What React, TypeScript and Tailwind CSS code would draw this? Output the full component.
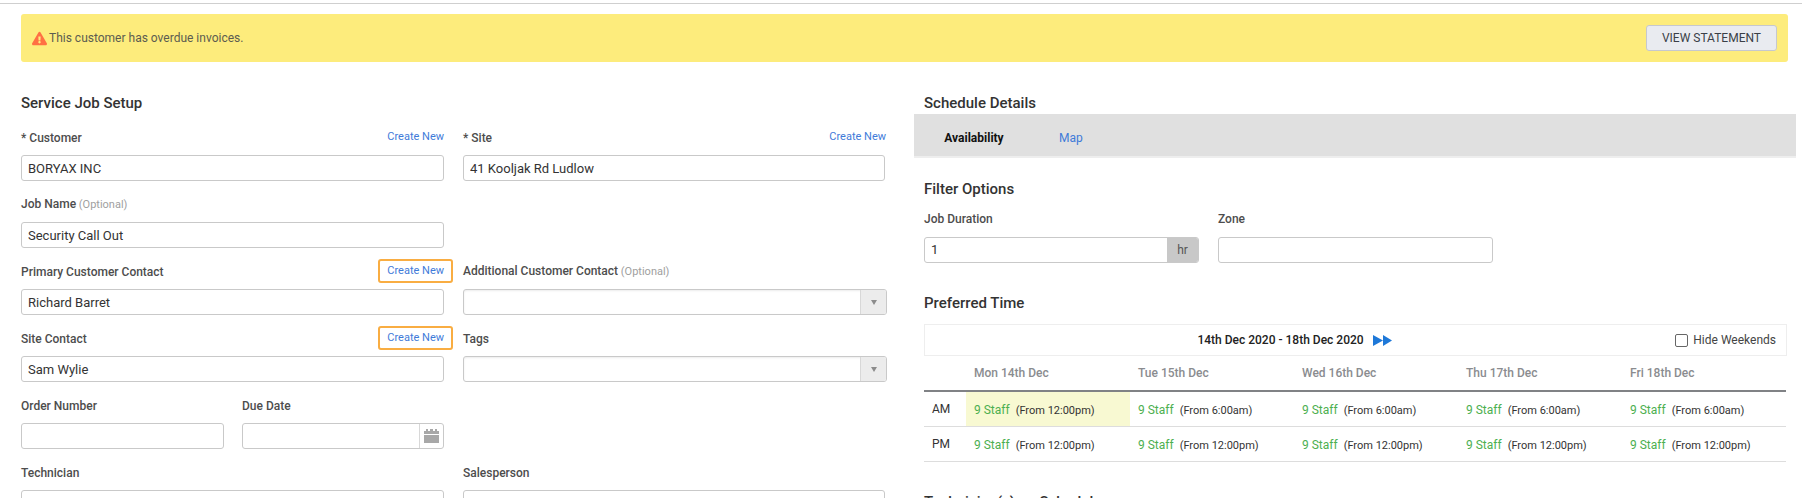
import { FaExclamationTriangle } from "react-icons/fa";

const days = ["Mon 14th Dec", "Tue 15th Dec", "Wed 16th Dec", "Thu 17th Dec", "Fri 18th Dec"];
const amTimes = ["12:00pm", "6:00am", "6:00am", "6:00am", "6:00am"];

function Label({ text, optional }: { text: string; optional?: boolean }) {
  return (
    <span className="text-[12px] leading-[18px] font-medium text-[#4d4d4d]">
      {text}
      {optional && <span className="text-[11px] font-normal text-[#a0a0a0]"> (Optional)</span>}
    </span>
  );
}

function CreateNew({ boxed }: { boxed?: boolean }) {
  return (
    <span className="relative -top-[1px] text-[11px] leading-[18px] text-[#3f7bd9]">
      Create New
      {boxed && (
        <span className="absolute -left-[9px] -right-[9px] -top-[3px] h-[24px] rounded-[3px] border-2 border-[#f9ad42]" />
      )}
    </span>
  );
}

function Field({
  label,
  optional,
  link,
  boxed,
  children,
}: {
  label: string;
  optional?: boolean;
  link?: boolean;
  boxed?: boolean;
  children: React.ReactNode;
}) {
  return (
    <div className="flex h-[67px] flex-col">
      <div className="flex h-[41px] items-end justify-between pb-[8px]">
        <Label text={label} optional={optional} />
        {link && <CreateNew boxed={boxed} />}
      </div>
      {children}
    </div>
  );
}

function TextBox({ value = "", className = "w-full" }: { value?: string; className?: string }) {
  return (
    <input
      readOnly
      value={value}
      className={`h-[26px] rounded-[3px] border border-[#c9c9c9] bg-white px-[6px] text-[13px] text-[#333] outline-none ${className}`}
    />
  );
}

function SelectBox() {
  return (
    <div className="flex h-[26px] w-full overflow-hidden rounded-[3px] border border-[#c9c9c9] bg-white shadow-[inset_0_1px_2px_rgba(0,0,0,0.08)]">
      <div className="flex-1" />
      <div className="flex w-[26px] items-center justify-center border-l border-[#d8d8d8] bg-[#ececec]">
        <svg width="6" height="5" viewBox="0 0 6 5">
          <polygon points="0,0 6,0 3,5" fill="#8c8c8c" />
        </svg>
      </div>
    </div>
  );
}

function DateBox() {
  return (
    <div className="flex h-[26px] w-full overflow-hidden rounded-[3px] border border-[#c9c9c9] bg-white">
      <div className="flex-1" />
      <div className="flex w-[24px] items-center justify-center border-l border-[#d8d8d8]">
        <svg width="15" height="14" viewBox="0 0 15 14">
          <path d="M2 0h2v2h2V0h3v2h2V0h2v2h2v3H0V2h2z" fill="#a8a8a8" />
          <rect x="0" y="6" width="15" height="8" fill="#a8a8a8" />
        </svg>
      </div>
    </div>
  );
}

function StaffCell({ time, highlight }: { time: string; highlight?: boolean }) {
  return (
    <td className={`px-[8px] ${highlight ? "bg-[#f8f9d2]" : ""}`}>
      <span className="text-[12px] text-[#4caf50]">9 Staff</span>
      <span className="ml-[6px] text-[11px] text-[#333]">(From {time})</span>
    </td>
  );
}

export default function App() {
  return (
    <div className="h-[498px] w-[1802px] overflow-hidden bg-white font-['Roboto',sans-serif]">
      <div className="mt-[3px] border-t border-[#cfcfcf]" />

      {/* Overdue banner */}
      <div className="mt-[10px] ml-[21px] flex h-[48px] w-[1767px] items-center justify-between rounded-[3px] bg-[#fdec7c] pr-[11px] pl-[11px]">
        <div className="flex items-center gap-[2px]">
          <FaExclamationTriangle className="h-[15px] w-[15px] text-[#ff7043]" />
          <span className="text-[12px] text-[#5c5c50]">This customer has overdue invoices.</span>
        </div>
        <button className="h-[26px] w-[131px] rounded-[3px] border border-[#c6c8ce] bg-[#e9ebf0] text-[12px] text-[#3a3f47] uppercase">
          View Statement
        </button>
      </div>

      <div className="mt-[31px] flex">
        {/* Job setup */}
        <div className="ml-[21px] w-[866px]">
          <h2 className="h-[21px] text-[15px] leading-[20px] font-medium text-[#333]">Service Job Setup</h2>
          <div className="grid grid-cols-[423px_424px] gap-x-[19px]">
            <Field label="* Customer" link>
              <TextBox value="BORYAX INC" />
            </Field>
            <div className="w-[423px]">
              <Field label="* Site" link>
                <TextBox value="41 Kooljak Rd Ludlow" className="w-[422px]" />
              </Field>
            </div>
            <Field label="Job Name" optional>
              <TextBox value="Security Call Out" />
            </Field>
            <div />
            <Field label="Primary Customer Contact" link boxed>
              <TextBox value="Richard Barret" />
            </Field>
            <Field label="Additional Customer Contact" optional>
              <SelectBox />
            </Field>
            <Field label="Site Contact" link boxed>
              <TextBox value="Sam Wylie" />
            </Field>
            <Field label="Tags">
              <SelectBox />
            </Field>
            <div className="grid grid-cols-[203px_202px] gap-x-[18px]">
              <Field label="Order Number">
                <TextBox />
              </Field>
              <Field label="Due Date">
                <DateBox />
              </Field>
            </div>
            <div />
            <Field label="Technician">
              <TextBox value="Richard Barret" />
            </Field>
            <Field label="Salesperson">
              <TextBox value="Adele" className="w-[422px]" />
            </Field>
          </div>
        </div>

        {/* Schedule */}
        <div className="ml-[27px] w-[882px]">
          <h2 className="ml-[10px] h-[21px] text-[15px] leading-[20px] font-medium text-[#333]">Schedule Details</h2>
          <div className="flex h-[44px] border-b-2 border-[#eeeeee] bg-[#e0e0e0] pl-[15px]">
            <div className="flex w-[90px] items-center justify-center pt-[5px] text-[12px] font-bold text-[#111]">
              Availability
            </div>
            <div className="ml-[40px] flex items-center pt-[5px] text-[12px] text-[#3f7bd9]">Map</div>
          </div>

          <div className="ml-[10px] w-[863px]">
            <h3 className="mt-[21px] text-[15px] leading-[20px] font-medium text-[#333]">Filter Options</h3>
            <div className="mt-[10px] flex gap-[19px]">
              <div className="w-[275px]">
                <div className="mb-[9px] leading-[18px]">
                  <Label text="Job Duration" />
                </div>
                <div className="flex h-[26px] overflow-hidden rounded-[3px] border border-[#c9c9c9]">
                  <input readOnly value="1" className="w-0 flex-1 px-[6px] text-[13px] text-[#333] outline-none" />
                  <div className="flex w-[31px] items-center justify-center bg-[#c8c8c8] text-[12px] text-[#555]">hr</div>
                </div>
              </div>
              <div className="w-[275px]">
                <div className="mb-[9px] leading-[18px]">
                  <Label text="Zone" />
                </div>
                <TextBox />
              </div>
            </div>

            <h3 className="mt-[30px] text-[15px] leading-[20px] font-medium text-[#333]">Preferred Time</h3>
            <div className="mt-[11px] flex h-[32px] items-center border border-[#eeeeee]">
              <div className="flex flex-1 items-center justify-center">
                <span className="text-[12px] font-medium text-[#222]">14th Dec 2020 - 18th Dec 2020</span>
                <svg className="ml-[9px]" width="19" height="11" viewBox="0 0 19 11">
                  <polygon points="0,0 10,5.5 0,11" fill="#1e78d8" />
                  <polygon points="10,0 19,5.5 10,11" fill="#1e78d8" />
                </svg>
              </div>
              <label className="flex w-[122px] items-center justify-end gap-[5px] pr-[10px] text-[12px] text-[#444]">
                <span className="h-[13px] w-[13px] rounded-[2px] border border-[#666] bg-white" />
                Hide Weekends
              </label>
            </div>

            <table className="w-[862px] table-fixed border-collapse">
              <colgroup>
                <col className="w-[42px]" />
                <col className="w-[164px]" />
                <col className="w-[164px]" />
                <col className="w-[164px]" />
                <col className="w-[164px]" />
                <col className="w-[164px]" />
              </colgroup>
              <thead>
                <tr className="h-[35px] border-b-2 border-[#808285]">
                  <th />
                  {days.map((d) => (
                    <th key={d} className="px-[8px] text-left text-[12px] font-medium text-[#8a8c8f]">
                      {d}
                    </th>
                  ))}
                </tr>
              </thead>
              <tbody>
                <tr className="h-[35px] border-b border-[#dddddd]">
                  <td className="pl-[8px] text-[12px] text-[#333]">AM</td>
                  {amTimes.map((t, i) => (
                    <StaffCell key={i} time={t} highlight={i === 0} />
                  ))}
                </tr>
                <tr className="h-[35px] border-b border-[#dddddd]">
                  <td className="pl-[8px] text-[12px] text-[#333]">PM</td>
                  {days.map((d) => (
                    <StaffCell key={d} time="12:00pm" />
                  ))}
                </tr>
              </tbody>
            </table>

            <h3 className="mt-[30px] text-[15px] leading-[20px] font-medium text-[#333]">Technician(s) on Schedule</h3>
          </div>
        </div>
      </div>
    </div>
  );
}
